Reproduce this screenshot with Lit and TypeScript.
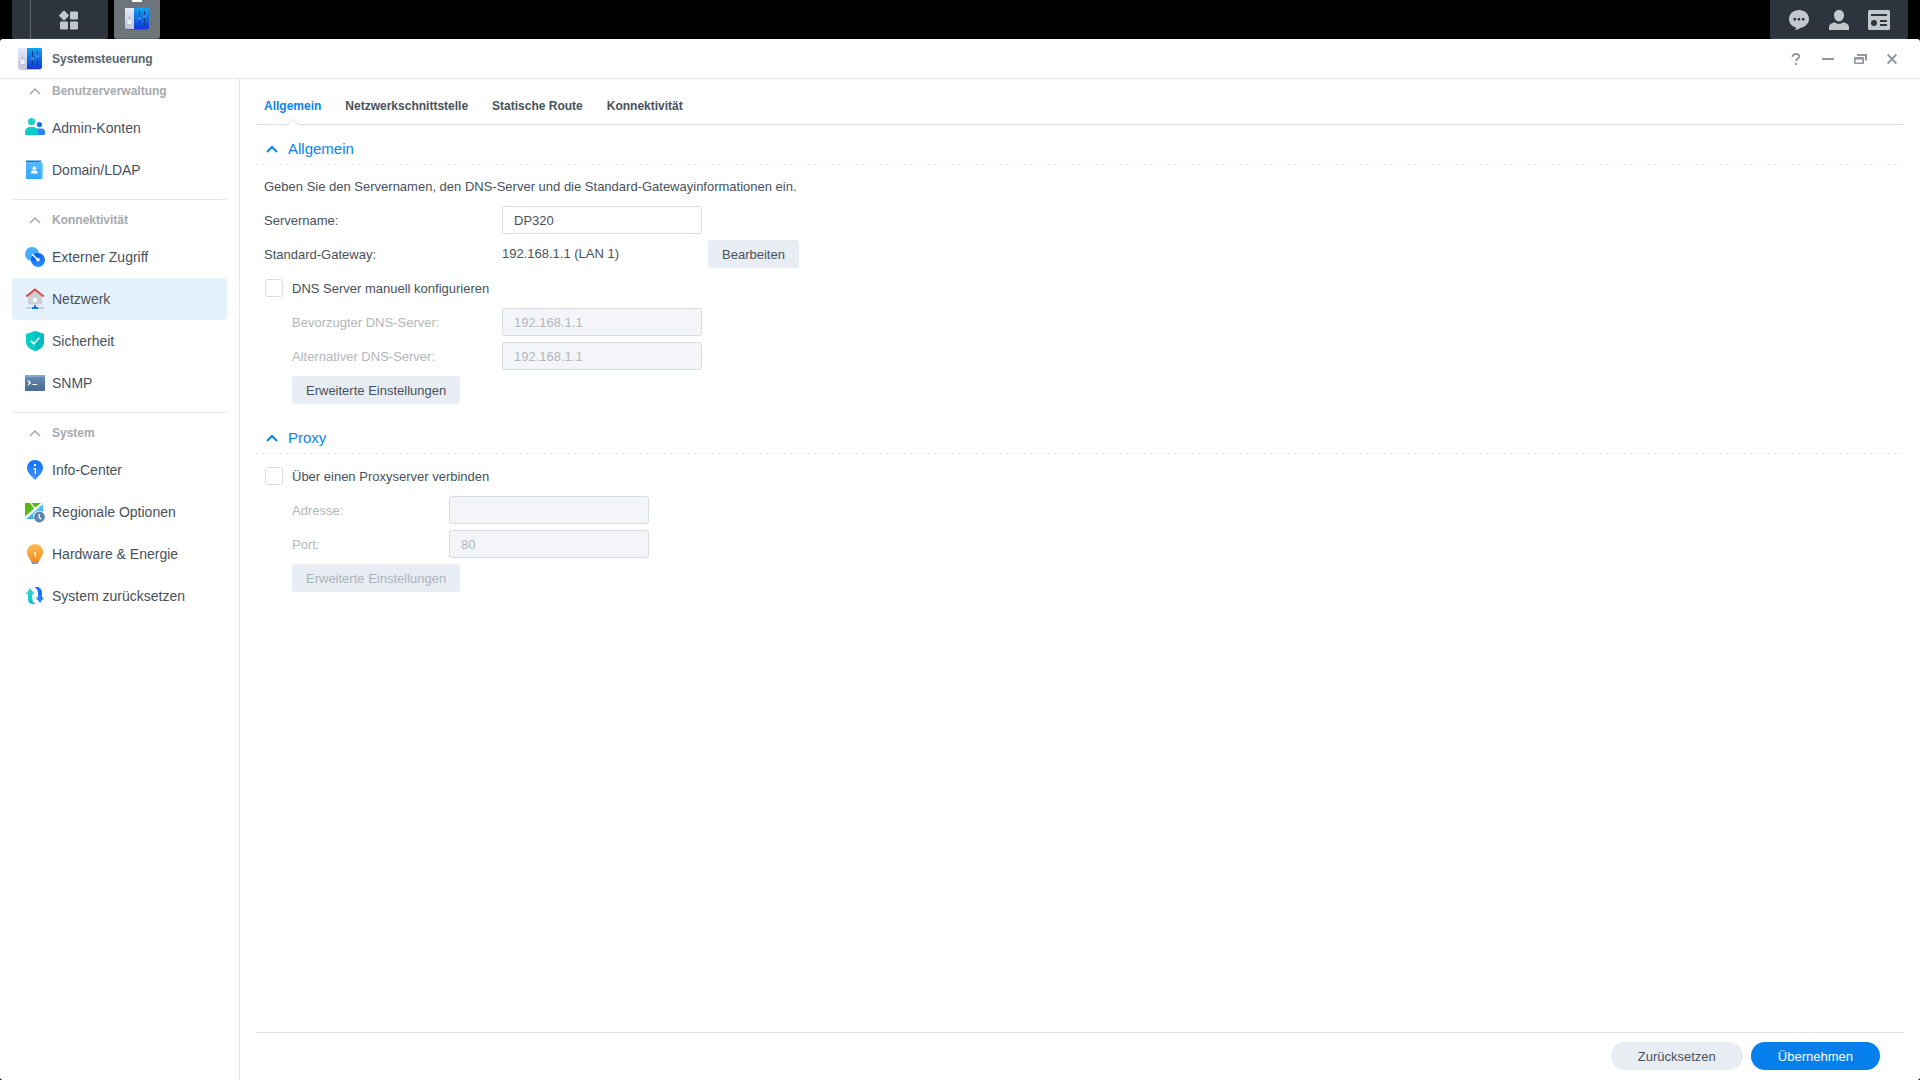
import { LitElement, html, svg, css, TemplateResult } from "lit";
import { customElement, state } from "lit/decorators.js";
import { classMap } from "lit/directives/class-map.js";

const panelIcon = (id: string) => html`
  <svg class="panel-icon" width="24" height="22" viewBox="0 0 24 22" aria-hidden="true">
    <defs>
      <linearGradient id="${id}-l" x1="0" y1="0" x2="0" y2="1"><stop offset="0" stop-color="#e6e8fa" /><stop offset="1" stop-color="#bfc4dc" /></linearGradient>
      <linearGradient id="${id}-r" x1="0" y1="0" x2="0" y2="1"><stop offset="0" stop-color="#12a2ee" /><stop offset="1" stop-color="#1338d8" /></linearGradient>
    </defs>
    <rect x="1" y="2" width="22" height="20" rx="2" fill="#1b2a66" opacity=".28" />
    <path d="M1 0H9V21H2a2 2 0 0 1-2-2V1a1 1 0 0 1 1-1Z" fill="url(#${id}-l)" />
    <path d="M9 0H23a1 1 0 0 1 1 1V19a2 2 0 0 1-2 2H9Z" fill="url(#${id}-r)" />
    <circle cx="4.500" cy="14.800" r="2.800" fill="#9fa6c8" opacity=".5" />
    <circle cx="4.500" cy="14.200" r="2.400" fill="#eceefa" />
    <circle cx="4.500" cy="9.500" r=".6" fill="#5f6688" />
    <path d="M14.500 3V17.500M19.500 3V17.500" stroke="#15397f" stroke-width="1" />
    <circle cx="14.500" cy="10.500" r="1.500" fill="#3490ea" />
    <circle cx="19.500" cy="8.500" r="1.500" fill="#3490ea" />
  </svg>`;

const icons: Record<string, TemplateResult> = {
  admin: svg`
    <circle cx="14.500" cy="6.500" r="2.600" fill="#1a73f5" />
    <path d="M9 17v-2.500a4 4 0 0 1 4-4h3.500a3.500 3.500 0 0 1 3.500 3.500v2a1 1 0 0 1-1 1Z" fill="#2d82ff" />
    <circle cx="6.500" cy="3.600" r="3.600" fill="#23d3c5" />
    <path d="M0 16v-2a5 5 0 0 1 5-5h3a5 5 0 0 1 5 5v3H1a1 1 0 0 1-1-1Z" fill="#02cfc4" />`,
  domain: svg`
    <path d="M2 3h16v14.500a1 1 0 0 1-1 1H3Z" fill="#84c9ff" />
    <path d="M1 1.500a1 1 0 0 1 1-1h14v2H1Z" fill="#1277f6" />
    <path d="M1 2h15.500v17H2a1 1 0 0 1-1-1Z" fill="url(#g-sky)" />
    <circle cx="9.300" cy="8.200" r="1.800" fill="#fff" />
    <path d="M6 13.500v-1a2 2 0 0 1 2-2h2.500a2 2 0 0 1 2 2v1Z" fill="#fff" />`,
  external: svg`
    <circle cx="7" cy="7" r="7" fill="#45adfc" />
    <circle cx="13" cy="13" r="7" fill="url(#g-blue)" />
    <path d="M13.900 6.060A7 7 0 0 1 6.060 13.900 7 7 0 0 1 13.900 6.060Z" fill="#0761ee" />
    <path d="M7.500 7.500l5 5" stroke="#fff" stroke-width="1.500" stroke-linecap="round" />
    <circle cx="13" cy="12.800" r="1.700" fill="#fff" />`,
  network: svg`
    <path d="M3 7l7-6 7 6v7.500a1 1 0 0 1-1 1H4a1 1 0 0 1-1-1Z" fill="#cdd0d5" />
    <path d="M1.300 7.600L10 .4l8.700 7.200" fill="none" stroke="#d94a45" stroke-width="2" stroke-linejoin="round" />
    <rect x="8" y="9" width="4" height="4" fill="#fff" />
    <path d="M1 18h18v2H1Z" fill="#c8cdd3" />
    <path d="M9 16h2v2h2v2H7v-2h2Z" fill="#0a78f8" />`,
  shield: svg`
    <path d="M10 0l9 3v7.500C19 15 15.500 18.500 10 20 4.500 18.500 1 15 1 10.500V3Z" fill="#05cdc5" />
    <path d="M10 0l9 3v7.500C19 15 15.500 18.500 10 20Z" fill="#02bdc3" />
    <path d="M5.800 9.800l3 3 5.400-6" fill="none" stroke="#fff" stroke-width="1.500" />`,
  snmp: svg`
    <path d="M1 2h18a1 1 0 0 1 1 1v14a1 1 0 0 1-1 1H1a1 1 0 0 1-1-1V3a1 1 0 0 1 1-1Z" fill="url(#g-term)" />
    <path d="M0 4V3a1 1 0 0 1 1-1h18a1 1 0 0 1 1 1v1Z" fill="#85a8cc" />
    <path d="M3 7.500l2.300 2.200L3 12M7.500 11.500H12" fill="none" stroke="#fff" stroke-width="1.200" />`,
  info: svg`
    <path d="M10 0a8 8 0 0 1 8 8c0 5-5 8.500-8 12-3-3.500-8-7-8-12a8 8 0 0 1 8-8Z" fill="url(#g-info)" />
    <path d="M9 4h2v2H9ZM8.500 8H11v6H9.700V9.200H8.500Z" fill="#fff" />`,
  region: svg`
    <path d="M0 1H18V17H0Z" fill="#eaf5ff" />
    <path d="M0 1H5L9 6.500 0 14.500ZM6.500 1h9.500L10.200 5.500Z" fill="#58b811" />
    <path d="M18 2V17H1.500Z" fill="url(#g-sky)" />
    <path d="M18 2V5L3 17H1Z" fill="#5bc4fb" />
    <path d="M17.600 1.200L0.500 15.600" stroke="#fff" stroke-width="1.200" />
    <circle cx="14.400" cy="15" r="6.200" fill="#fff" />
    <circle cx="14.400" cy="15" r="5.400" fill="#5b84b0" />
    <path d="M14.200 12v3.200l2 2" fill="none" stroke="#fff" stroke-width="1.300" />`,
  bulb: svg`
    <path d="M10 0a8 8 0 0 1 8 8c0 4-3 6-4 9H6C5 14 2 12 2 8a8 8 0 0 1 8-8Z" fill="url(#g-bulb)" />
    <path d="M6 17h8v1.200l-1 .3V20H7v-1.500l-1-.3Z" fill="#949aa2" />
    <path d="M8.800 8.200h2.200V13H9.700V9.400h-.9Z" fill="#fff" />`,
  reset: svg`
    <path d="M5 2l4.500 6H7.300v5c0 2 1 3.500 3 5C5.500 19 3 16.500 3 13V8H.8Z" fill="url(#g-teal)" />
    <path d="M9.500 1.300C14 .3 17 3 17 7v4.500h2L15 17l-4.300-5.500H13V7c0-2.500-1-4.500-3.500-5.700Z" fill="url(#g-blue)" />`,
};

const gradients = svg`
  <defs>
    <linearGradient id="g-sky" x1="0" y1="0" x2="0" y2="1"><stop offset="0" stop-color="#5cb8ff" /><stop offset="1" stop-color="#30a7fb" /></linearGradient>
    <linearGradient id="g-blue" x1="0" y1="0" x2="0" y2="1"><stop offset="0" stop-color="#0b67f5" /><stop offset="1" stop-color="#2f8dff" /></linearGradient>
    <linearGradient id="g-info" x1="0" y1="0" x2="0" y2="1"><stop offset="0" stop-color="#0a70fb" /><stop offset="1" stop-color="#4594fc" /></linearGradient>
    <linearGradient id="g-term" x1="0" y1="0" x2="0" y2="1"><stop offset="0" stop-color="#6b8fb5" /><stop offset="1" stop-color="#456a93" /></linearGradient>
    <linearGradient id="g-bulb" x1="0" y1="0" x2="0" y2="1"><stop offset="0" stop-color="#fbbd5c" /><stop offset="1" stop-color="#f98f1c" /></linearGradient>
    <linearGradient id="g-teal" x1="0" y1="0" x2="0" y2="1"><stop offset="0" stop-color="#3bd8cd" /><stop offset="1" stop-color="#05c3cc" /></linearGradient>
  </defs>`;

const chevron = html`
  <svg class="chevron" width="12" height="8" viewBox="0 0 12 8" aria-hidden="true">
    <path d="M1 7l5-5 5 5" fill="none" stroke="currentColor" />
  </svg>`;

interface NavItem { icon: string; label: string; }
interface NavGroup { title: string; items: NavItem[]; }

const groups: NavGroup[] = [
  { title: "Benutzerverwaltung", items: [
    { icon: "admin", label: "Admin-Konten" },
    { icon: "domain", label: "Domain/LDAP" },
  ] },
  { title: "Konnektivität", items: [
    { icon: "external", label: "Externer Zugriff" },
    { icon: "network", label: "Netzwerk" },
    { icon: "shield", label: "Sicherheit" },
    { icon: "snmp", label: "SNMP" },
  ] },
  { title: "System", items: [
    { icon: "info", label: "Info-Center" },
    { icon: "region", label: "Regionale Optionen" },
    { icon: "bulb", label: "Hardware & Energie" },
    { icon: "reset", label: "System zurücksetzen" },
  ] },
];

const tabs = ["Allgemein", "Netzwerkschnittstelle", "Statische Route", "Konnektivität"];

@customElement("app-root")
export class AppRoot extends LitElement {
  @state() private page = "Netzwerk";
  @state() private tab = "Allgemein";
  @state() private manualDns = false;
  @state() private useProxy = false;

  static styles = css`
    :host {
      display: flex;
      flex-direction: column;
      height: 100vh;
      background: #000;
      color: #48515b;
      font: 13px/28px "Liberation Sans", Arial, sans-serif;
    }
    * { box-sizing: border-box; }
    button, input { font: inherit; color: inherit; }
    button { border: 0; padding: 0; background: none; cursor: pointer; }
    svg { display: block; flex: none; }
    .chevron { stroke-width: 2; }

    .taskbar { flex: none; display: flex; gap: 6px; height: 39px; padding: 0 12px; }
    .launcher, .tray { display: flex; background: #2d343e; border-radius: 0 0 3px 3px; box-shadow: inset 0 -1px #3c4652; }
    .launcher { width: 96px; }
    .show-desktop { width: 19px; border-right: 1px solid #626971; }
    .menu { flex: 1; display: flex; align-items: center; justify-content: center; }
    .task { position: relative; width: 46px; display: flex; justify-content: center; padding-top: 8px; background: #6d747b; border-radius: 0 0 3px 3px; box-shadow: inset 0 -1px #5c6269; }
    .task::before { content: ""; position: absolute; top: 0; left: 18px; width: 10px; height: 2px; background: #fff; }
    .tray { margin-left: auto; padding: 0 9px; }
    .tray button { width: 40px; display: flex; align-items: center; justify-content: center; }

    .window { flex: 1; min-height: 0; display: flex; flex-direction: column; background: #fff; border-radius: 3px; overflow: hidden; }
    .titlebar { flex: none; height: 40px; display: flex; align-items: center; gap: 10px; padding: 0 12px 0 18px; border-bottom: 1px solid #dbe5ed; }
    .title { margin: 0; font-size: 12px; font-weight: 700; color: #5a646e; }
    .controls { margin-left: auto; display: flex; color: #8f979f; }
    .controls button { width: 32px; height: 32px; display: flex; align-items: center; justify-content: center; }

    .body { flex: 1; min-height: 0; display: flex; }
    .sidebar { flex: none; width: 240px; padding: 0 12px; border-right: 1px solid #dfe6ee; overflow: hidden; }
    .group + .group { margin-top: 8px; padding-top: 4px; border-top: 1px solid #e4e9ef; }
    .group:first-child { margin-top: -4px; }
    .group-title { display: flex; align-items: center; gap: 11px; width: 100%; height: 32px; padding-left: 17px; font-size: 12px; font-weight: 700; color: #a5aaaf; }
    .group-title .chevron { stroke-width: 1.5; }
    .items { list-style: none; margin: 0; padding: 0; }
    .item { display: flex; align-items: center; gap: 7px; height: 42px; padding-left: 13px; border-radius: 4px; font-size: 14px; color: #48515b; text-decoration: none; }
    .item.current { background: #e5f1fd; }

    .main { flex: 1; min-width: 0; display: flex; flex-direction: column; padding: 0 16px; }
    .tabs { flex: none; display: flex; gap: 24px; height: 46px; padding: 13px 8px 0; border-bottom: 1px solid #d5e1ea; }
    .tab { position: relative; height: 33px; padding-bottom: 5px; font-size: 12px; font-weight: 700; }
    .tab.current { color: #0a84ee; }
    .notch { position: absolute; bottom: -1px; left: calc(50% - 7px); }

    .content { flex: 1; min-height: 0; }
    .section { margin-bottom: 10px; }
    .section-head { display: flex; align-items: flex-end; height: 40px; padding: 0 8px 1px; background: repeating-linear-gradient(90deg, #dbe4ec 0 2px, transparent 2px 6px) left bottom / 100% 1px no-repeat; }
    .section-title { display: flex; align-items: center; gap: 10px; padding-left: 2px; font-size: 15px; line-height: 30px; color: #0a84ee; }
    .rows { display: flex; flex-direction: column; gap: 6px; padding: 8px 8px 0; }
    .intro { margin: 0; line-height: 27px; }
    .row { display: flex; height: 28px; line-height: 30px; }
    .row > .name { flex: none; width: 238px; }
    .row.sub { padding-left: 28px; }
    .row.sub > .name { width: 210px; }
    .row.proxy > .name { width: 157px; }
    .row.off { color: #b2b7bb; }
    .value { width: 206px; line-height: 28px; }
    .field { width: 200px; height: 28px; padding: 1px 11px 0; border: 1px solid #d3dee8; border-radius: 3px; background: #fff; outline: none; }
    .field:disabled { background: #f3f5f9; color: #b2b7bb; }
    .btn { height: 28px; padding: 1px 14px 0; border-radius: 3px; background: #e8edf4; line-height: 27px; }
    .btn:disabled { color: #adb4bb; cursor: default; }
    .check { display: flex; align-items: center; gap: 9px; height: 28px; padding-left: 1px; }
    .check span { padding-top: 1px; }
    .check input { appearance: none; flex: none; width: 18px; height: 18px; margin: 0; border: 1px solid #d3dee8; border-radius: 3px; background: #fff; }
    .check input:checked { background: #0a80ec; border-color: #0a80ec; }

    .footer { flex: none; display: flex; justify-content: flex-end; gap: 8px; height: 48px; padding: 9px 24px 0; border-top: 1px solid #dbe5ed; }
    .pill { height: 28px; padding: 1px 27px 0; border-radius: 14px; background: #e8edf4; line-height: 27px; }
    .pill.primary { background: #057feb; color: #fff; }
  `;

  private renderTaskbar() {
    return html`
      <header class="taskbar">
        <div class="launcher">
          <button class="show-desktop" aria-label="Desktop anzeigen"></button>
          <button class="menu" aria-label="Hauptmenü">
            <svg width="22" height="20" viewBox="0 0 22 20" fill="#c3c8cd">
              <path d="M5.500 .8l4.200 4.200a.8.800 0 0 1 0 1L5.500 10.200a.8.800 0 0 1-1 0L.3 6a.8.800 0 0 1 0-1L4.500 .8a.8.800 0 0 1 1 0Z" />
              <rect x="11" y="1.500" width="8" height="8" rx="1" />
              <rect x="1" y="11.500" width="8" height="8" rx="1" />
              <rect x="11" y="11.500" width="8" height="8" rx="1" />
            </svg>
          </button>
        </div>
        <button class="task" aria-label="Systemsteuerung">${panelIcon("task")}</button>
        <div class="tray">
          <button aria-label="Benachrichtigungen">
            <svg width="20" height="20" viewBox="0 0 20 20">
              <path d="M10 0c5.500 0 10 3.800 10 9 0 4.600-4 8-8.500 8.800-1.500 1.300-3.500 2.200-5.500 2.200.8-.8 1-1.700.8-2.600C2.500 16.200 0 13 0 9 0 3.800 4.500 0 10 0Z" fill="#c3c8cd" />
              <path d="M4.500 8h2.500v2.500H4.500ZM8.700 8h2.500v2.500H8.700ZM13 8h2.500v2.500H13Z" fill="#2d343e" />
            </svg>
          </button>
          <button aria-label="Benutzer">
            <svg width="20" height="20" viewBox="0 0 20 20" fill="#c3c8cd">
              <path d="M10 0c2.800 0 5 2 5 5 0 3.500-2 6.500-5 6.500S5 8.500 5 5c0-3 2.200-5 5-5Z" />
              <path d="M0 20v-3c0-2.500 2.500-4 5.800-4.800C7 13.200 8.500 13.800 10 13.800s3-.6 4.200-1.600C17.500 13 20 14.500 20 17v3Z" />
            </svg>
          </button>
          <button aria-label="Widgets">
            <svg width="22" height="20" viewBox="0 0 22 20">
              <rect width="22" height="20" rx="1.500" fill="#c3c8cd" />
              <path d="M3 4h16v2H3ZM12 10h7v2h-7ZM12 14h7v2h-7Z" fill="#2d343e" />
              <circle cx="6" cy="13" r="3" fill="#2d343e" />
            </svg>
          </button>
        </div>
      </header>`;
  }

  private renderControls() {
    return html`
      <div class="controls">
        <button aria-label="Hilfe">
          <svg width="10" height="12" viewBox="0 0 10 12" fill="none" stroke="currentColor" stroke-width="1.800"><path d="M1.500 4V3.500C1.500 2 3 1 5 1s3.300 1 3.300 2.600C8.300 5.500 5 5.600 5 8.300M5 10v2" /></svg>
        </button>
        <button aria-label="Minimieren">
          <svg width="12" height="12" viewBox="0 0 12 12"><path d="M0 5h12v2H0Z" fill="currentColor" /></svg>
        </button>
        <button aria-label="Verkleinern">
          <svg width="13" height="10" viewBox="0 0 13 10" fill="currentColor" fill-rule="evenodd"><path d="M3 0h10v6.500h-2V2H3ZM1 3h8a1 1 0 0 1 1 1v5a1 1 0 0 1-1 1H1a1 1 0 0 1-1-1V4a1 1 0 0 1 1-1Zm.700 2.500v3h6.600v-3Z" /></svg>
        </button>
        <button aria-label="Schließen">
          <svg width="10" height="10" viewBox="0 0 10 10" stroke="currentColor" stroke-width="2"><path d="M.7 .5l8.600 9M9.300 .5l-8.600 9" /></svg>
        </button>
      </div>`;
  }

  private renderSidebar() {
    return html`
      <nav class="sidebar" aria-label="Einstellungen">
        ${groups.map((g) => html`
          <section class="group">
            <button class="group-title" aria-expanded="true">${chevron}<span>${g.title}</span></button>
            <ul class="items">
              ${g.items.map((i) => html`
                <li>
                  <a href="#${i.icon}" class=${classMap({ item: true, current: i.label === this.page })}
                    @click=${() => (this.page = i.label)}>
                    <svg width="20" height="20" viewBox="0 0 20 20" overflow="visible" aria-hidden="true">${gradients}${icons[i.icon]}</svg>
                    <span>${i.label}</span>
                  </a>
                </li>`)}
            </ul>
          </section>`)}
      </nav>`;
  }

  private renderSection(title: string, rows: TemplateResult) {
    return html`
      <section class="section">
        <div class="section-head">
          <button class="section-title" aria-expanded="true">${chevron}<span>${title}</span></button>
        </div>
        <div class="rows">${rows}</div>
      </section>`;
  }

  render() {
    const dnsOff = !this.manualDns;
    const proxyOff = !this.useProxy;
    const dnsRow = classMap({ row: true, sub: true, off: dnsOff });
    const proxyRow = classMap({ row: true, sub: true, proxy: true, off: proxyOff });
    return html`
      ${this.renderTaskbar()}
      <div class="window">
        <div class="titlebar">
          ${panelIcon("win")}
          <h1 class="title">Systemsteuerung</h1>
          ${this.renderControls()}
        </div>
        <div class="body">
          ${this.renderSidebar()}
          <main class="main">
            <div class="tabs" role="tablist">
              ${tabs.map((t) => html`
                <button role="tab" aria-selected=${t === this.tab} class=${classMap({ tab: true, current: t === this.tab })}
                  @click=${() => (this.tab = t)}>
                  ${t}
                  ${t === this.tab ? html`<svg class="notch" width="14" height="8" viewBox="0 0 14 8" aria-hidden="true">
                    <path d="M1 8V7.500L7 1.500l6 6V8Z" fill="#fff" /><path d="M.5 7.500L7 1.500l6.500 6" fill="none" stroke="#d5e1ea" />
                  </svg>` : ""}
                </button>`)}
            </div>
            <div class="content">
              ${this.renderSection("Allgemein", html`
                <p class="intro">Geben Sie den Servernamen, den DNS-Server und die Standard-Gatewayinformationen ein.</p>
                <div class="row">
                  <label class="name" for="server">Servername:</label>
                  <input class="field" id="server" type="text" value="DP320" />
                </div>
                <div class="row">
                  <span class="name">Standard-Gateway:</span>
                  <span class="value">192.168.1.1 (LAN 1)</span>
                  <button class="btn">Bearbeiten</button>
                </div>
                <div class="row">
                  <label class="check">
                    <input type="checkbox" .checked=${this.manualDns} @change=${() => (this.manualDns = !this.manualDns)} />
                    <span>DNS Server manuell konfigurieren</span>
                  </label>
                </div>
                <div class=${dnsRow}>
                  <label class="name" for="dns1">Bevorzugter DNS-Server:</label>
                  <input class="field" id="dns1" type="text" value="192.168.1.1" ?disabled=${dnsOff} />
                </div>
                <div class=${dnsRow}>
                  <label class="name" for="dns2">Alternativer DNS-Server:</label>
                  <input class="field" id="dns2" type="text" value="192.168.1.1" ?disabled=${dnsOff} />
                </div>
                <div class="row sub"><button class="btn">Erweiterte Einstellungen</button></div>`)}
              ${this.renderSection("Proxy", html`
                <div class="row">
                  <label class="check">
                    <input type="checkbox" .checked=${this.useProxy} @change=${() => (this.useProxy = !this.useProxy)} />
                    <span>Über einen Proxyserver verbinden</span>
                  </label>
                </div>
                <div class=${proxyRow}>
                  <label class="name" for="address">Adresse:</label>
                  <input class="field" id="address" type="text" ?disabled=${proxyOff} />
                </div>
                <div class=${proxyRow}>
                  <label class="name" for="port">Port:</label>
                  <input class="field" id="port" type="text" value="80" ?disabled=${proxyOff} />
                </div>
                <div class="row sub"><button class="btn" ?disabled=${proxyOff}>Erweiterte Einstellungen</button></div>`)}
            </div>
            <footer class="footer">
              <button class="pill">Zurücksetzen</button>
              <button class="pill primary">Übernehmen</button>
            </footer>
          </main>
        </div>
      </div>`;
  }
}
